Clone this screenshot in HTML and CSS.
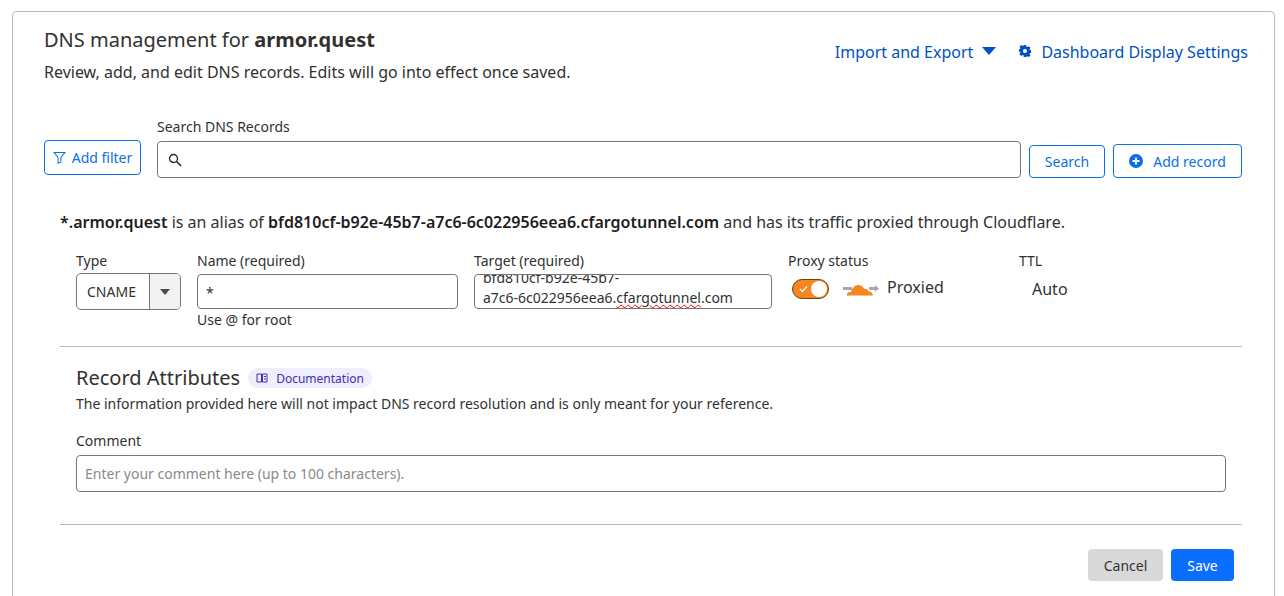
FILE: index.html
```html
<!DOCTYPE html>
<html lang="en">
<head>
    <meta charset="UTF-8">
    <title>DNS management</title>
    <link rel="stylesheet" href="styles.css">
</head>
<body>
<section class="card">
    <header class="head">
        <div>
            <h1 class="title">DNS management for <b>armor.quest</b></h1>
            <p class="sub">Review, add, and edit DNS records. Edits will go into effect once saved.</p>
        </div>
        <nav class="links">
            <a class="link">Import and Export
                <svg class="caret" width="14" height="8" viewBox="0 0 14 8"><path d="M0 0h14L7 8z" fill="#0051c3"/></svg>
            </a>
            <a class="link link-gear">
                <svg width="12" height="12" viewBox="0 0 16 16"><path fill="#0051c3" fill-rule="evenodd" d="M6.4 0h3.200l.4 2.200 1.200.5 1.900-1.200 2.200 2.300-1.200 1.800.5 1.200 2.200.4v3.200l-2.200.4-.5 1.200 1.200 1.800-2.200 2.300-1.900-1.200-1.200.5-.4 2.200H6.400L6 13.800l-1.200-.5-1.900 1.200L.7 12.200l1.200-1.800-.5-1.200L0 8.800V5.600l1.400-.2.500-1.200L.7 2.400 2.900.1l1.900 1.200L6 .8zM8 5.200a2.800 2.800 0 1 0 0 5.600 2.800 2.800 0 0 0 0-5.600z"/></svg>
                Dashboard Display Settings
            </a>
        </nav>
    </header>

    <div class="search-row">
        <button class="btn btn-filter">
            <svg width="13" height="13" viewBox="0 0 14 14"><path d="M1 1.500h12L8.500 7v5L5.500 13V7z" fill="none" stroke="#0a6fe8" stroke-width="1.100"/></svg>
            Add filter
        </button>
        <div class="search-field">
            <label class="label">Search DNS Records</label>
            <div class="input search-input">
                <svg width="14" height="14" viewBox="0 0 14 14"><circle cx="5.500" cy="5.500" r="4" fill="none" stroke="#222" stroke-width="1.300"/><path d="M8.500 8.500l4.500 4.500" stroke="#222" stroke-width="1.600"/></svg>
            </div>
        </div>
        <button class="btn btn-search">Search</button>
        <button class="btn btn-add">
            <svg width="14" height="14" viewBox="0 0 14 14"><circle cx="7" cy="7" r="7" fill="#0a6fe8"/><path d="M3.500 7h7M7 3.500v7" stroke="#fff" stroke-width="1.800"/></svg>
            Add record
        </button>
    </div>

    <div class="record">
        <p class="alias"><b>*.armor.quest</b> is an alias of <b>bfd810cf-b92e-45b7-a7c6-6c022956eea6.cfargotunnel.com</b> and has its traffic proxied through Cloudflare.</p>

        <div class="fields">
            <div class="field f-type">
                <label class="label">Type</label>
                <div class="select">
                    <span class="select-val">CNAME</span>
                    <span class="select-arrow"><i></i></span>
                </div>
            </div>
            <div class="field f-name">
                <label class="label">Name (required)</label>
                <div class="input">*</div>
                <span class="hint">Use @ for root</span>
            </div>
            <div class="field f-target">
                <label class="label">Target (required)</label>
                <div class="input target"><div class="target-text">bfd810cf-b92e-45b7-<br>a7c6-6c022956eea6.<span class="typo">cfargotunnel</span>.com</div></div>
            </div>
            <div class="field f-proxy">
                <label class="label">Proxy status</label>
                <div class="proxy">
                    <span class="toggle">
                        <svg width="9" height="8" viewBox="0 0 9 8"><path d="M1 4l2.500 2.500L8 1.500" fill="none" stroke="#fff" stroke-width="1.200"/></svg>
                        <i></i>
                    </span>
                    <svg class="cloud" width="36" height="16" viewBox="0 0 36 16">
                        <path d="M0 6h9v3H0zM26 6h7v3h-7z" fill="#a8a8a8"/>
                        <path d="M32 4l4 3.500-4 3.500z" fill="#a8a8a8"/>
                        <path d="M4 14.500c-.5-2 .8-3.500 3-3.500 .3-.1.700-.1 1 0 1-3 3-7 7-7 3 0 5 1.500 6 4 2-.5 4 .5 4.500 2.500 2-.2 4 1 4.500 4z" fill="#f6861f"/>
                    </svg>
                    <span class="proxy-text">Proxied</span>
                </div>
            </div>
            <div class="field f-ttl">
                <label class="label">TTL</label>
                <span class="ttl-val">Auto</span>
            </div>
        </div>

        <hr class="rule">

        <div class="attrs">
            <div class="attrs-head">
                <h2 class="attrs-title">Record Attributes</h2>
                <span class="doc">
                    <svg width="12" height="10" viewBox="0 0 12 10"><path d="M1 1h4.500v8H1zM6.500 1H11v8H6.500z" fill="none" stroke="#3c2fb5" stroke-width="1"/><path d="M8 3.500h2M8 6h2" stroke="#3c2fb5" stroke-width="1"/></svg>
                    Documentation
                </span>
            </div>
            <p class="attrs-sub">The information provided here will not impact DNS record resolution and is only meant for your reference.</p>
            <label class="label comment-label">Comment</label>
            <div class="input comment">Enter your comment here (up to 100 characters).</div>
        </div>

        <hr class="rule">

        <div class="actions">
            <button class="btn-solid btn-cancel">Cancel</button>
            <button class="btn-solid btn-save">Save</button>
        </div>
    </div>
</section>
</body>
</html>
```

FILE: styles.css
```css
html,body{ margin: 0; padding: 0; height: 596px; overflow: hidden; background: #fff; }
body{ font-family: "Noto Sans", sans-serif; color: #313131; font-size: 14px; }
h1,h2,p{ margin: 0; font-weight: 400; }
button{ font-family: inherit; cursor: pointer; }

.card{ margin: 11px 9px 0 12px; padding: 0 31px; border: 1px solid #b9b9b9; border-bottom: 0; border-radius: 5px 5px 0 0; height: 585px; box-sizing: border-box; overflow: hidden; }

.head{ display: flex; justify-content: space-between; padding-top: 13px; height: 106px; box-sizing: border-box; }
.title{ font-size: 20px; line-height: 30px; }
.title b{ font-weight: 700; }
.sub{ font-size: 16px; line-height: 22px; margin-top: 6px; }
.links{ display: flex; align-items: flex-start; gap: 23px; padding-top: 16px; margin-right: -5px; }
.link{ color: #0051c3; font-size: 16px; line-height: 22px; display: flex; align-items: center; }
.caret{ margin-left: 9px; margin-top: -2px; }
.link-gear svg{ margin-right: 10px; margin-top: -2px; }

.search-row{ display: flex; align-items: flex-end; }
.label{ display: block; font-size: 14px; line-height: 18px; color: #313131; }
.btn{ background: #fff; border: 1px solid #0a6fe8; border-radius: 4px; color: #0a6fe8; font-size: 14px; display: flex; align-items: center; justify-content: center; padding: 0; }
.btn-filter{ width: 97px; height: 35px; gap: 6px; margin-bottom: 3px; }
.search-field{ width: 864px; margin-left: 16px; }
.search-field .label{ margin-bottom: 5px; }
.input{ border: 1px solid #767676; border-radius: 4px; box-sizing: border-box; background: #fff; }
.search-input{ height: 37px; display: flex; align-items: center; padding-left: 10px; }
.btn-search{ width: 76px; height: 33px; margin-left: 8px; }
.btn-add{ width: 129px; height: 34px; margin-left: 8px; gap: 10px; }

.record{ padding-left: 16px; width: 1182px; }
.alias{ font-size: 16px; line-height: 22px; margin-top: 33px; }
.alias b{ font-weight: 600; color: #1d1d1d; }

.fields{ display: flex; padding-left: 16px; margin-top: 19px; height: 94px; }
.field .label{ margin-bottom: 4px; }
.f-type{ width: 105px; margin-right: 16px; }
.f-name{ width: 261px; margin-right: 16px; }
.f-target{ width: 298px; margin-right: 16px; }
.f-proxy{ width: 231px; }

.select{ display: flex; height: 37px; margin-top: -1px; border: 1px solid #767676; border-radius: 5px; box-sizing: border-box; overflow: hidden; }
.select-val{ width: 72px; padding-left: 10px; line-height: 35px; box-sizing: border-box; }
.select-arrow{ flex: 1; background: #f2f2f2; border-left: 1px solid #767676; display: flex; align-items: center; justify-content: center; }
.select-arrow i{ width: 0; height: 0; border-left: 5px solid transparent; border-right: 5px solid transparent; border-top: 6px solid #4a4a4a; }

.f-name .input{ height: 35px; line-height: 35px; padding-left: 8px; }
.hint{ display: block; line-height: 18px; margin-top: 2px; }

.target{ height: 35px; overflow: hidden; padding-left: 8px; line-height: 20px; }
.target-text{ margin-top: -7px; }
.typo{ text-decoration: underline wavy; text-decoration-color: #f00; text-decoration-thickness: 1px; text-underline-offset: 1px; }

.proxy{ display: flex; align-items: center; padding-left: 4px; height: 26px; margin-top: 2px; }
.toggle{ width: 37px; height: 20px; margin-top: 4px; background: #f6861f; border: 1px solid #7a3f0c; border-radius: 10px; box-sizing: border-box; display: flex; align-items: center; justify-content: space-between; padding: 0 1px 0 6px; }
.toggle i{ width: 16px; height: 16px; background: #fff; border-radius: 50%; }
.cloud{ margin: 4px 0 0 14px; }
.proxy-text{ font-size: 16px; margin-left: 8px; }

.ttl-val{ display: block; font-size: 16px; margin: 8px 0 0 13px; line-height: 22px; }

.rule{ border: 0; border-top: 1px solid #b9b9b9; margin: 0; }
.attrs{ padding: 0 16px; height: 177px; box-sizing: border-box; }
.attrs-head{ display: flex; align-items: center; padding-top: 16px; height: 46px; box-sizing: border-box; }
.attrs-title{ font-size: 20px; line-height: 30px; }
.doc{ display: flex; align-items: center; gap: 8px; margin-left: 8px; height: 20px; padding: 0 8px; border-radius: 10px; background: #f0edfc; color: #3c2fb5; font-size: 12px; }
.attrs-sub{ line-height: 20px; margin-top: 1px; }
.comment-label{ margin-top: 18px; margin-bottom: 5px; }
.comment{ height: 37px; line-height: 35px; padding-left: 8px; color: #8a8a8a; }

.actions{ display: flex; justify-content: flex-end; gap: 8px; padding-right: 8px; margin-top: 24px; }
.btn-solid{ border: 0; border-radius: 4px; height: 32px; font-size: 14px; padding: 0; }
.btn-cancel{ width: 75px; background: #d9d9d9; color: #313131; }
.btn-save{ width: 63px; background: #0a6fff; color: #fff; }
```
